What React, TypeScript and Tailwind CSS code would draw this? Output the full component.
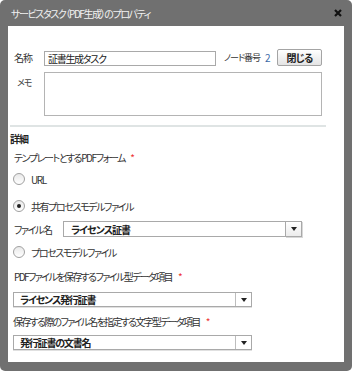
import React from "react";

const font = {
  fontFamily: '"Noto Sans CJK JP", "Noto Sans", sans-serif',
  fontFeatureSettings: '"palt"',
};

function Radio({ checked, label }: { checked?: boolean; label: string }) {
  return (
    <div className="flex items-center h-[14px] whitespace-nowrap">
      <div className="w-[12px] h-[12px] rounded-full border border-[#a0a0a0] bg-gradient-to-b from-[#e9e9e9] to-white flex items-center justify-center">
        {checked && <div className="w-[4px] h-[4px] rounded-full bg-[#222]" />}
      </div>
      <span className="ml-[6px] text-[10px] tracking-[-1.4px] text-[#333]">{label}</span>
    </div>
  );
}

function Arrow() {
  return (
    <svg width="6" height="4" viewBox="0 0 6 4"><path d="M0 0h6L3 4z" fill="#222" /></svg>
  );
}

function Select({ value }: { value: string }) {
  return (
    <div className="flex h-[15px] w-[239px] border border-[#a9a9a9] bg-white shadow-[0_1px_0_#e0e0e0]">
      <div className="flex-1 flex items-center pl-[6px] text-[10px] tracking-[-1.2px] font-bold text-[#222] whitespace-nowrap">{value}</div>
      <div className="w-[16px] border-l border-[#bdbdbd] flex items-center justify-center">
        <Arrow />
      </div>
    </div>
  );
}

export default function App() {
  return (
    <div className="w-[352px] h-[371px] bg-white" style={font}>
      <div className="w-[352px] h-[371px] bg-[#707070] rounded-[5px] flex flex-col px-[8px] pb-[9px]">
        <div className="h-[26px] flex items-center justify-between pl-[3px] pr-[2px]">
          <span className="text-[10px] tracking-[-1.4px] text-[#f2f2f2] whitespace-nowrap">サービスタスク（PDF生成）のプロパティ</span>
          <svg width="8" height="8" viewBox="0 0 8 8">
            <path d="M1 1L7 7M7 1L1 7" stroke="#111" strokeWidth="2.2" />
          </svg>
        </div>
        <div className="flex-1 bg-white flex flex-col">
          <div className="flex items-center h-[17px] mt-[23px] pl-[6px] whitespace-nowrap">
            <span className="w-[30px] text-[10px] tracking-[-1px] text-[#333]">名称</span>
            <div className="w-[172px] h-[15px] mt-[2px] border border-[#a9a9a9] flex items-center pl-[3px] text-[10px] tracking-[-1.3px] text-[#222]">証書生成タスク</div>
            <span className="ml-[8px] w-[35px] text-[9px] tracking-[-1px] text-[#333]">ノード番号</span>
            <span className="ml-[6px] w-[6px] text-[10px] text-[#3d6aa8]">2</span>
            <div className="ml-[6px] w-[45px] h-[17px] border border-[#a4a4a4] rounded-[2px] bg-gradient-to-b from-white to-[#e4e4e4] flex items-center justify-center text-[10px] tracking-[-0.8px] font-bold text-[#222]">閉じる</div>
          </div>
          <div className="flex mt-[6px] pl-[9px]">
            <span className="w-[27px] mt-[4px] text-[9px] tracking-[-1px] text-[#444] leading-[14px]">メモ</span>
            <div className="w-[278px] h-[44px] border border-[#b4b4b4]" />
          </div>
          <div className="mt-[9px] ml-[2px] w-[316px] h-[2px] bg-[#dfe4e4]" />
          <div className="mt-[5px] pl-[2px] text-[10px] tracking-[-1px] font-bold text-[#222] leading-[14px]">詳細</div>
          <div className="mt-[5px] pl-[6px] text-[10px] tracking-[-1.4px] text-[#333] leading-[14px] whitespace-nowrap">
            テンプレートとするPDFフォーム<span className="ml-[5px] text-[#e33]">*</span>
          </div>
          <div className="mt-[7px] pl-[5px]"><Radio label="URL" /></div>
          <div className="mt-[13px] pl-[5px]"><Radio checked label="共有プロセスモデルファイル" /></div>
          <div className="mt-[8px] pl-[6px] flex items-center h-[16px] whitespace-nowrap">
            <span className="w-[49px] text-[10px] tracking-[-1.4px] text-[#333]">ファイル名</span>
            <div className="w-[223px] h-[16px] border border-[#a9a9a9] flex items-center pl-[7px] text-[10px] tracking-[-1px] font-bold text-[#222]">ライセンス証書</div>
            <div className="w-[17px] h-[16px] border border-[#a9a9a9] -ml-[1px] bg-gradient-to-b from-white to-[#ececec] flex items-center justify-center shadow-[1px_1px_0_#d8d8d8]">
              <Arrow />
            </div>
          </div>
          <div className="mt-[8px] pl-[5px]"><Radio label="プロセスモデルファイル" /></div>
          <div className="mt-[11px] pl-[6px] text-[10px] tracking-[-1.6px] text-[#333] leading-[14px] whitespace-nowrap">
            PDFファイルを保存するファイル型データ項目<span className="ml-[6px] text-[#e33]">*</span>
          </div>
          <div className="mt-[8px] pl-[5px]"><Select value="ライセンス発行証書" /></div>
          <div className="mt-[8px] pl-[5px] text-[10px] tracking-[-1.7px] text-[#333] leading-[14px] whitespace-nowrap">
            保存する際のファイル名を指定する文字型データ項目<span className="ml-[6px] text-[#e33]">*</span>
          </div>
          <div className="mt-[6px] pl-[5px]"><Select value="発行証書の文書名" /></div>
        </div>
      </div>
    </div>
  );
}
